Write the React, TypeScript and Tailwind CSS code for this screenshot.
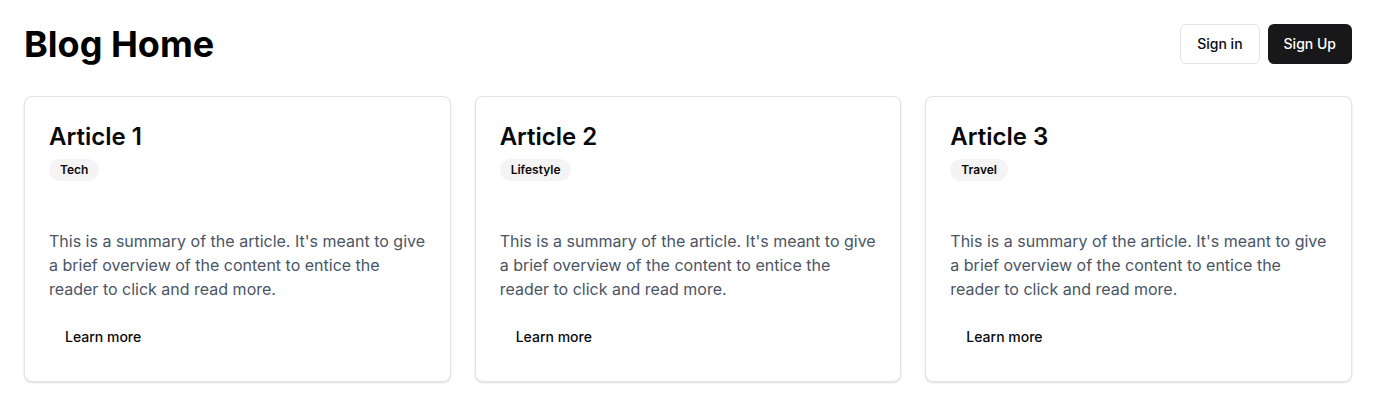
import React from "react";

const articles = [
  { id: 1, title: "Article 1", tag: "Tech" },
  { id: 2, title: "Article 2", tag: "Lifestyle" },
  { id: 3, title: "Article 3", tag: "Travel" },
];

const summary =
  "This is a summary of the article. It's meant to give a brief overview of the content to entice the reader to click and read more.";

export default function App() {
  return (
    <div className="min-h-screen bg-white p-6 text-[#09090b] font-['Inter',sans-serif]">
      {/* Header */}
      <div className="flex items-center justify-between mb-8">
        <h1 className="text-4xl font-bold text-black">Blog Home</h1>
        <div className="flex items-center gap-2">
          <button className="h-10 px-4 rounded-md border border-zinc-200 bg-white text-sm font-medium text-[#09090b]">
            Sign in
          </button>
          <button className="h-10 px-4 rounded-md bg-[#18181b] text-sm font-medium text-white">
            Sign Up
          </button>
        </div>
      </div>

      {/* Articles */}
      <div className="grid grid-cols-3 gap-6">
        {articles.map((a) => (
          <div key={a.id} className="flex flex-col rounded-lg border border-zinc-200 bg-white shadow-sm">
            <div className="flex flex-col gap-[3px] p-6">
              <h2 className="text-2xl font-semibold">{a.title}</h2>
              <div>
                <span className="inline-flex items-center rounded-full border border-transparent bg-zinc-100 px-2.5 py-0.5 text-xs font-semibold">
                  {a.tag}
                </span>
              </div>
            </div>
            <div className="px-6 pt-6 pb-[16px]">
              <p className="text-base text-gray-600">{summary}</p>
            </div>
            <div className="flex items-center px-6 pb-6">
              <button className="h-10 px-4 rounded-md text-sm font-medium text-[#09090b]">
                Learn more
              </button>
            </div>
          </div>
        ))}
      </div>
    </div>
  );
}
